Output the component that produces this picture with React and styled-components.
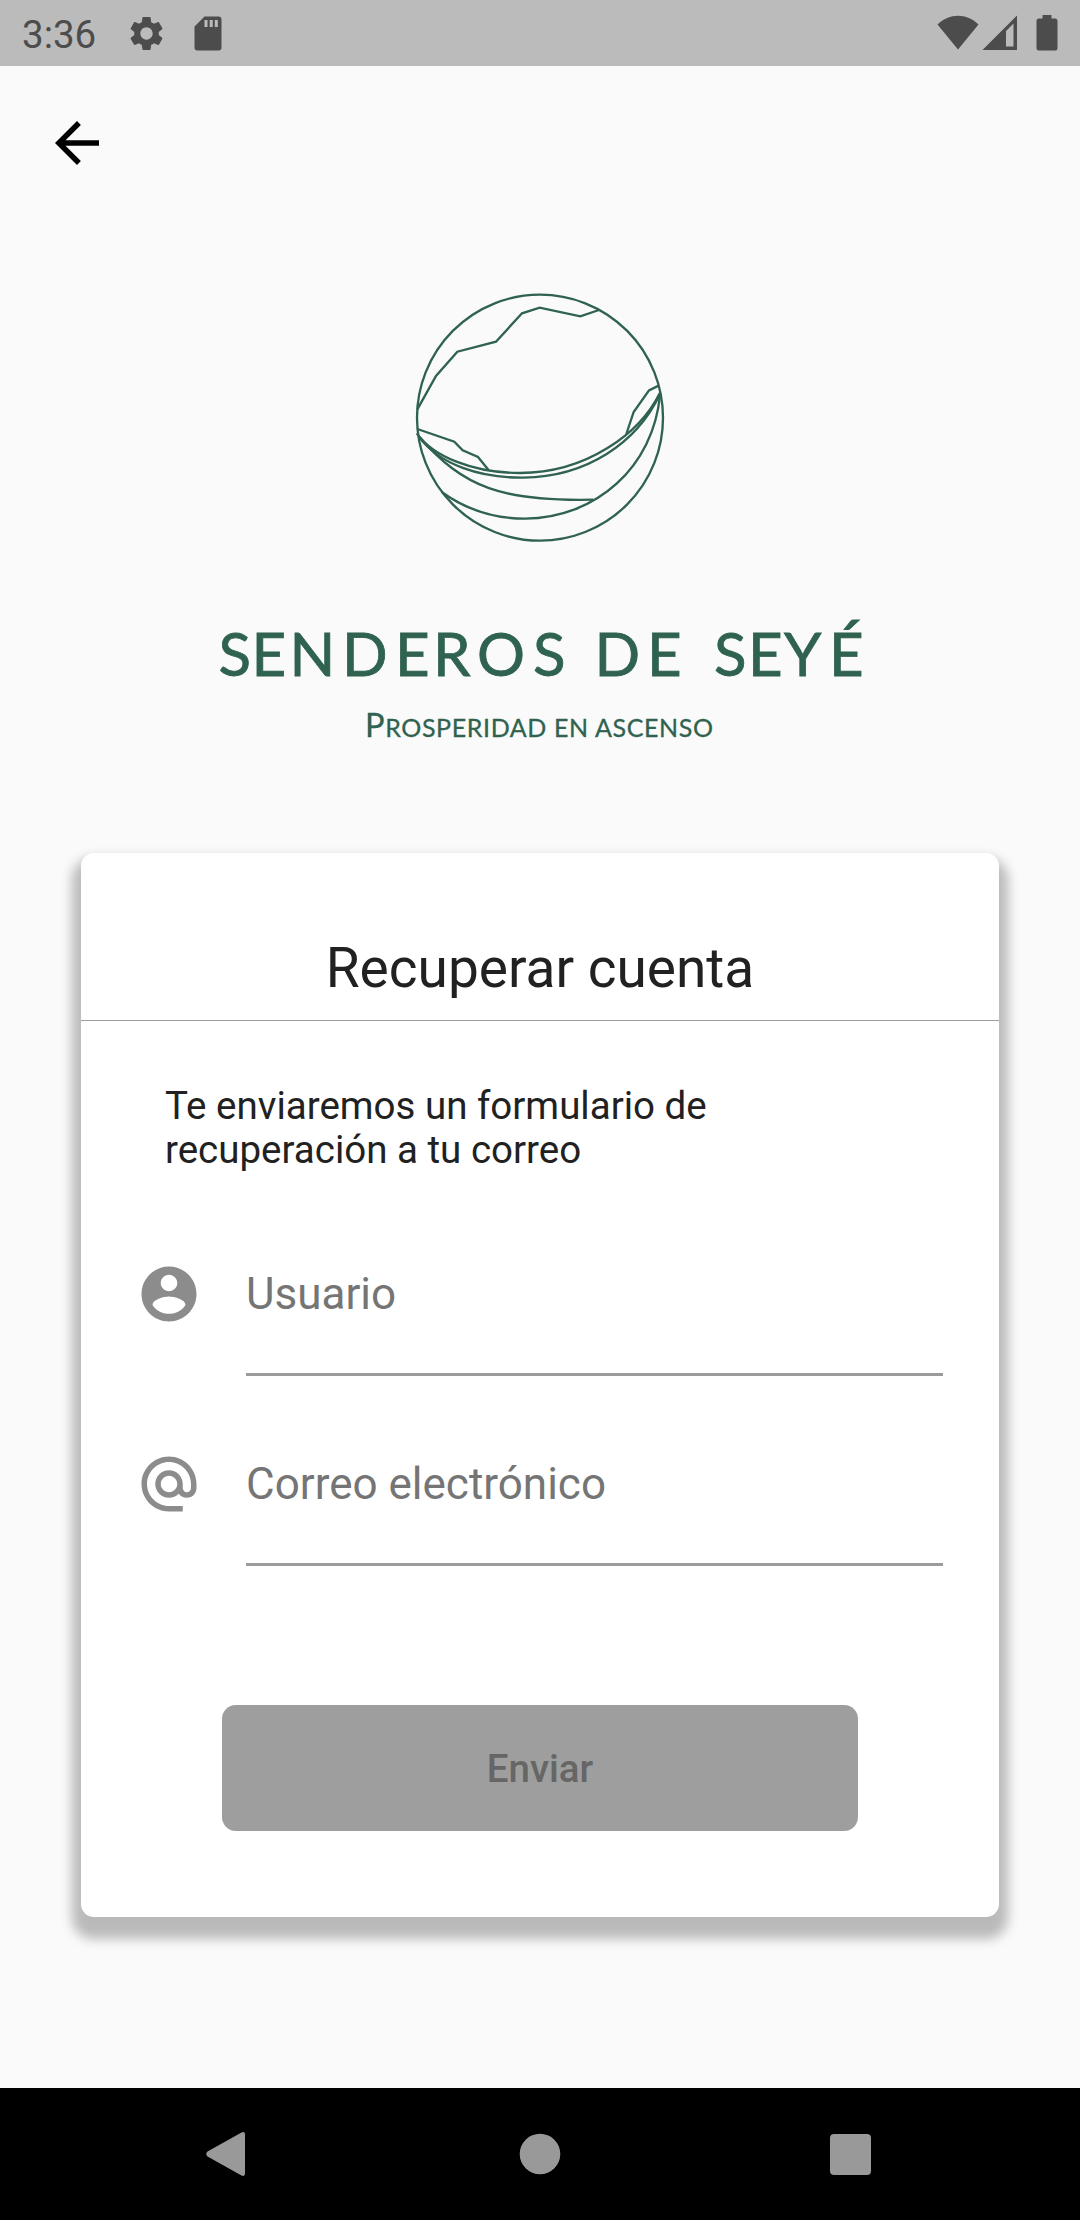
import React from "react";
import styled, { createGlobalStyle } from "styled-components";
import { MdAlternateEmail, MdArrowBack, MdSettings } from "react-icons/md";

const GlobalStyle = createGlobalStyle`
  * {
    box-sizing: border-box;
  }

  body {
    margin: 0;
    background: #fafafa;
    font-family: Roboto, "Liberation Sans", sans-serif;
  }
`;

const Screen = styled.div`
  width: 1080px;
  height: 2220px;
  display: flex;
  flex-direction: column;
  background: #fafafa;
  overflow: hidden;
`;

const StatusBar = styled.header`
  height: 66px;
  flex: none;
  display: flex;
  align-items: center;
  padding: 0 22px 0 22px;
  background: #bbb;
  color: #4c4c4c;

  svg {
    display: block;
    flex: none;
  }
`;

const Clock = styled.span`
  width: 104px;
  padding-top: 3px;
  font-size: 38.5px;
  line-height: 40px;
`;

const StatusIcons = styled.div`
  display: flex;
  align-items: center;
  gap: ${({ $gap }) => $gap}px;
  margin-left: ${({ $end }) => ($end ? "auto" : "0")};
`;

const AppBar = styled.div`
  height: 154px;
  flex: none;
  display: flex;
  align-items: center;
  padding-left: 44px;
`;

const BackButton = styled.button`
  width: 66px;
  height: 66px;
  padding: 0;
  border: none;
  background: none;
  color: #000;
  font-size: 66px;
  line-height: 0;
`;

const Brand = styled.div`
  height: 633px;
  flex: none;
  display: flex;
  flex-direction: column;
  align-items: center;
  gap: 40px;
  padding-top: 60px;

  svg {
    display: block;
    flex: none;
  }
`;

const Card = styled.main`
  width: 918px;
  height: 1064px;
  flex: none;
  margin: 0 auto;
  display: flex;
  flex-direction: column;
  border-radius: 13px;
  background: #fff;
  box-shadow: 0 13.75px 12px 8.25px rgba(0, 0, 0, 0.26);
`;

const CardTitle = styled.h1`
  margin: 0;
  padding: 83px 0 20px;
  border-bottom: 1px solid #9e9e9e;
  color: #212121;
  font-size: 55px;
  font-weight: 400;
  line-height: 64px;
  text-align: center;
`;

const Hint = styled.p`
  width: 620px;
  margin: 63px 0 41px 84px;
  color: #212121;
  font-size: 38.5px;
  line-height: 44px;
`;

const Fields = styled.div`
  display: flex;
  flex-direction: column;
  gap: 27px;
  padding: 0 56px 0 55px;
`;

const Field = styled.label`
  height: 163px;
  display: flex;
  align-items: center;
  gap: 44px;
  color: #8c8c8c;
  font-size: 66px;

  svg {
    display: block;
    flex: none;
    margin-bottom: 2px;
  }
`;

const FieldInput = styled.div`
  height: 163px;
  flex: 1;
  border-bottom: 3px solid #9b9b9b;
  color: #757575;
  font-size: 44px;
  line-height: 163px;
`;

const SubmitButton = styled.button`
  width: 636px;
  height: 126px;
  margin: 139px auto 0;
  border: none;
  border-radius: 14px;
  background: #9e9e9e;
  color: #666;
  font-family: inherit;
  font-size: 38.5px;
  font-weight: 500;
`;

const NavigationBar = styled.nav`
  height: 132px;
  flex: none;
  margin-top: auto;
  display: flex;
  align-items: center;
  justify-content: space-between;
  padding: 0 209px 0 204px;
  background: #000;

  svg {
    display: block;
    fill: #999;
  }
`;

const SdCardIcon = () => (
  <svg width="28" height="35" viewBox="0 0 28 35">
    <path
      fill="currentColor"
      fillRule="evenodd"
      d="M10.500.5H24.500a3 3 0 0 1 3 3V31.500a3 3 0 0 1-3 3H3.500a3 3 0 0 1-3-3V10.500ZM10.500 4v7h3V4ZM15.700 4v7h3V4ZM20.800 4v7h3V4Z"
    />
  </svg>
);

const WifiIcon = () => (
  <svg width="42" height="36" viewBox="0 0 42 36">
    <path fill="currentColor" d="M.5 9.500C12-2.300 30-2.300 41.500 9.500L21 34.500Z" />
  </svg>
);

const SignalIcon = () => (
  <svg width="35" height="36" viewBox="0 0 35 36">
    <path
      fill="currentColor"
      fillRule="evenodd"
      d="M35 .5V35H.5ZM24 16V31.500H31.500V8.500Z"
    />
  </svg>
);

const BatteryIcon = () => (
  <svg width="22" height="36" viewBox="0 0 22 36">
    <path
      fill="currentColor"
      d="M6.500 0h9v3.500H19a2.500 2.500 0 0 1 2.500 2.500V33a2.500 2.500 0 0 1-2.500 2.500H3A2.500 2.500 0 0 1 .5 33V6A2.500 2.500 0 0 1 3 3.500h3.500Z"
    />
  </svg>
);

const AccountIcon = () => (
  <svg width="66" height="66" viewBox="0 0 24 24">
    <path
      fill="currentColor"
      d="M12 2C6.480 2 2 6.480 2 12s4.480 10 10 10 10-4.480 10-10S17.520 2 12 2zm0 3c1.660 0 3 1.340 3 3s-1.340 3-3 3-3-1.340-3-3 1.340-3 3-3zm0 14.200c-2.500 0-4.710-1.280-6-3.220.030-1.990 4-3.080 6-3.080 1.990 0 5.970 1.090 6 3.080-1.290 1.940-3.500 3.220-6 3.220z"
    />
  </svg>
);

const BrandMark = () => (
  <svg
    width="280"
    height="270"
    viewBox="0 0 840 810"
    fill="none"
    stroke="#2f624f"
    strokeWidth="7"
  >
    <circle cx="420" cy="413" r="369" />
    {/* mountains */}
    <path d="M52 388L108 288L172 215L288 185L366 100L419 83L541 109L597 90" />
    <path d="M52 447L163 485L188 511L234 531L265 569" />
    <path d="M776 317L747 331L701 396L679 462" />
    {/* valley */}
    <path d="M50 460C100 530 220 579 360 579C560 579 720 460 780 338" />
    <path d="M56 470C120 555 240 594 370 593C560 590 710 490 780 342" />
    <path d="M56 468C190 625 310 665 580 659" />
    <path d="M125 636C200 690 290 716 375 716C590 714 760 560 780 345" />
  </svg>
);

const WordMark = () => (
  <svg
    width="660"
    height="160"
    viewBox="210 590 660 160"
    fill="#2f624f"
    stroke="#2f624f"
    fontFamily="Lato, sans-serif"
  >
    <text
      fontSize="60"
      strokeWidth="0.8"
      y="675.700"
      x="218.500 251.500 289.500 342 395 433 477 533 565 594.500 647 680 714 748 784 829"
    >
      SENDEROS DE SEYÉ
    </text>
    <text y="736.500" x="365" fontSize="32.500" strokeWidth="0.3" textLength="348">
      P<tspan fontSize="25">ROSPERIDAD EN ASCENSO</tspan>
    </text>
  </svg>
);

export default function App() {
  return (
    <Screen>
      <GlobalStyle />
      <StatusBar>
        <Clock>3:36</Clock>
        <StatusIcons $gap={27}>
          <MdSettings size={41} />
          <SdCardIcon />
        </StatusIcons>
        <StatusIcons $end $gap={19}>
          <StatusIcons $gap={3}>
            <WifiIcon />
            <SignalIcon />
          </StatusIcons>
          <BatteryIcon />
        </StatusIcons>
      </StatusBar>

      <AppBar>
        <BackButton aria-label="Volver">
          <MdArrowBack />
        </BackButton>
      </AppBar>

      <Brand>
        <BrandMark />
        <WordMark />
      </Brand>

      <Card>
        <CardTitle>Recuperar cuenta</CardTitle>
        <Hint>Te enviaremos un formulario de recuperación a tu correo</Hint>
        <Fields>
          <Field>
            <AccountIcon />
            <FieldInput>Usuario</FieldInput>
          </Field>
          <Field>
            <MdAlternateEmail />
            <FieldInput>Correo electrónico</FieldInput>
          </Field>
        </Fields>
        <SubmitButton disabled>Enviar</SubmitButton>
      </Card>

      <NavigationBar>
        <svg width="46" height="46" viewBox="0 0 46 46">
          <path d="M3.500 20.500L37.500 1.500Q41 0 41 3.500V42.500Q41 46 37.500 44.500L3.500 25.500Q1 23 3.500 20.500Z" />
        </svg>
        <svg width="42" height="42" viewBox="0 0 42 42">
          <circle cx="21" cy="21" r="20.300" />
        </svg>
        <svg width="41" height="41" viewBox="0 0 41 41">
          <rect width="41" height="41" rx="4" />
        </svg>
      </NavigationBar>
    </Screen>
  );
}
